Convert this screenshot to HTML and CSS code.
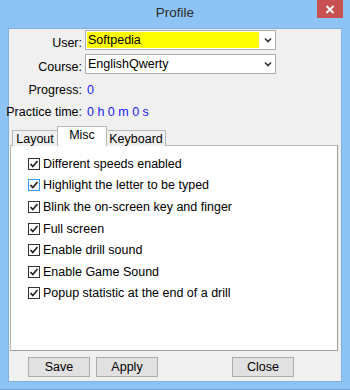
FILE: index.html
```html
<!DOCTYPE html>
<html>
<head>
    <meta charset="UTF-8">
    <meta name="viewport" content="width=device-width, initial-scale=1.0">
    <title>Profile</title>

    <link rel="stylesheet" href="styles.css">
</head>

<body>
    <div class="window">
        <div class="titlebar">
            <span class="title">Profile</span>
            <span class="close-box">
                <svg width="10" height="9" viewBox="0 0 10 9">
                    <path d="M1.5 1 L8.5 8 M8.5 1 L1.5 8" stroke="#fff" stroke-width="1.8" fill="none"/>
                </svg>
            </span>
        </div>

        <div class="client">
            <div class="fields">
                <span class="field-label">User:</span>
                <div class="combo">
                    <span class="combo-text selected">Softpedia</span>
                    <svg class="arrow" width="8" height="6" viewBox="0 0 8 6">
                        <path d="M1 1.5 L4 4.5 L7 1.5" stroke="#333" stroke-width="1.6" fill="none"/>
                    </svg>
                </div>

                <span class="field-label">Course:</span>
                <div class="combo">
                    <span class="combo-text">EnglishQwerty</span>
                    <svg class="arrow" width="8" height="6" viewBox="0 0 8 6">
                        <path d="M1 1.5 L4 4.5 L7 1.5" stroke="#333" stroke-width="1.6" fill="none"/>
                    </svg>
                </div>

                <span class="field-label info first">Progress:</span>
                <span class="value first">0</span>

                <span class="field-label info">Practice time:</span>
                <span class="value">0 h 0 m 0 s</span>
            </div>

            <div class="tabs">
                <span class="tab tab-layout">Layout</span>
                <span class="tab tab-misc active">Misc</span>
                <span class="tab tab-keyboard">Keyboard</span>
            </div>

            <div class="tab-panel">
                <ul class="options">
                    <li><span class="check"></span>Different speeds enabled</li>
                    <li><span class="check hover"></span>Highlight the letter to be typed</li>
                    <li><span class="check"></span>Blink the on-screen key and finger</li>
                    <li><span class="check"></span>Full screen</li>
                    <li><span class="check"></span>Enable drill sound</li>
                    <li><span class="check"></span>Enable Game Sound</li>
                    <li><span class="check"></span>Popup statistic at the end of a drill</li>
                </ul>
            </div>

            <div class="buttons">
                <button class="btn">Save</button>
                <button class="btn btn-apply">Apply</button>
                <button class="btn btn-close">Close</button>
            </div>
        </div>
    </div>
</body>
</html>
```

FILE: styles.css
```css
body {
    margin: 0;
    font-family: "Liberation Sans", Arial, sans-serif;
    font-size: 12.5px;
    color: #000;
    background-color: #8ec4f5;
}

.window {
    width: 350px;
    height: 390px;
    box-sizing: border-box;
    padding: 0 8px 8px 8px;
    background-color: #8ec4f5;
    border-bottom: 1px solid #6f9fd0;
}

.titlebar {
    position: relative;
    height: 28px;
    text-align: center;
}

.title {
    display: inline-block;
    margin-top: 5px;
    font-size: 13.5px;
    color: #2b2b2b;
}

.close-box {
    position: absolute;
    top: 0;
    right: -1px;
    width: 26px;
    height: 18px;
    background-color: #c75050;
    display: flex;
    align-items: center;
    justify-content: center;
}

.client {
    height: 354px;
    box-sizing: border-box;
    border: 1px solid #83b0dd;
    background-color: #f0f0f0;
}

/* ユーザー・コース欄 */
.fields {
    display: grid;
    grid-template-columns: 73px 191px;
    grid-template-rows: 20px 20px 22px 22px;
    column-gap: 3px;
    row-gap: 4px;
    padding-top: 1px;
    height: 94px;
}

.field-label {
    justify-self: end;
    white-space: nowrap;
    padding-top: 6px;
    line-height: 15px;
}

.field-label.info,
.value {
    padding-top: 0;
    line-height: 22px;
}

.field-label.first,
.value.first {
    margin-top: 1px;
}

.fields .info:not(.first),
.fields .value:not(.first) {
    margin-top: -3px;
}

.value {
    color: #1a1af0;
    padding-left: 2px;
    white-space: nowrap;
}

.combo {
    height: 20px;
    box-sizing: border-box;
    border: 1px solid #acacac;
    background-color: #fff;
    display: flex;
    align-items: center;
    padding: 1px;
}

.combo-text {
    width: 172px;
    height: 16px;
    line-height: 16px;
    padding-left: 1px;
    box-sizing: border-box;
}

.combo-text.selected {
    background-color: #ffff00;
}

.arrow {
    margin-left: 5px;
}

/* タブ */
.tabs {
    display: flex;
    align-items: flex-end;
    height: 20px;
    margin-top: 2px;
    padding-left: 3px;
    margin-bottom: -1px;
}

.tab {
    height: 16px;
    box-sizing: border-box;
    border: 1px solid #b9b9b9;
    border-bottom: none;
    background-color: #f0f0f0;
    text-align: center;
    line-height: 16px;
}

.tab + .tab {
    margin-left: -1px;
}

.tab-layout {
    width: 46px;
}

.tab-misc {
    width: 50px;
}

.tab-keyboard {
    width: 60px;
}

.tab.active {
    height: 20px;
    background-color: #fff;
    line-height: 17px;
    position: relative;
    z-index: 1;
}

.tab-panel {
    height: 206px;
    box-sizing: border-box;
    margin: 0 3px 0 1px;
    border: 1px solid #b9b9b9;
    border-right-color: #a0a0a0;
    border-bottom-color: #a0a0a0;
    background-color: #fff;
}

.options {
    list-style: none;
    margin: 0;
    padding: 7px 0 0 17px;
}

.options li {
    display: flex;
    align-items: center;
    height: 21.6px;
}

.check {
    width: 12px;
    height: 12px;
    box-sizing: border-box;
    border: 1px solid #333;
    margin-right: 3px;
    background: #fff url("data:image/svg+xml;utf8,<svg xmlns='http://www.w3.org/2000/svg' width='10' height='10'><path d='M1.5 5 L3.8 7.5 L8.5 2' stroke='%23222' stroke-width='1.7' fill='none'/></svg>") no-repeat center;
}

.check.hover {
    border-color: #3399ff;
}

/* ボタン */
.buttons {
    display: flex;
    padding: 6px 0 0 19px;
}

.btn {
    width: 62px;
    height: 20px;
    padding: 0;
    border: 1px solid #adadad;
    background-color: #e1e1e1;
    font-family: "Liberation Sans", Arial, sans-serif;
    font-size: 12.5px;
    color: #000;
}

.btn-apply {
    margin-left: 6px;
}

.btn-close {
    margin-left: 74px;
}
```
